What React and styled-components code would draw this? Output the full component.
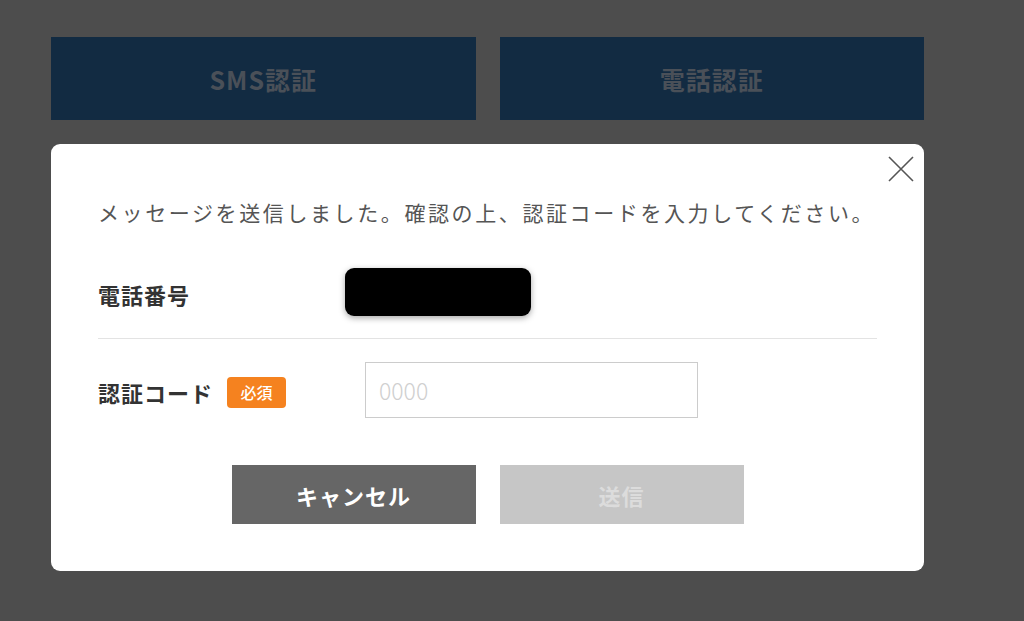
import React from "react";
import styled, { createGlobalStyle } from "styled-components";

const Global = createGlobalStyle`
  html, body { margin: 0; padding: 0; background: #4d4d4d; }
  body { font-family: "Noto Sans CJK JP", "Noto Sans", sans-serif; }
  * { box-sizing: border-box; }
`;

const Page = styled.div`
  width: 1024px;
  height: 621px;
  padding: 37px 0 0 51px;
  overflow: hidden;
`;

const Column = styled.div`
  width: 873px;
  display: flex;
  flex-direction: column;
  gap: 24px;
`;

const TabRow = styled.div`
  display: grid;
  grid-template-columns: 1fr 1fr;
  gap: 24px;
`;

const TabButton = styled.div`
  height: 83px;
  background: #122b42;
  color: #4a5058;
  font-weight: 700;
  font-size: 25px;
  letter-spacing: 1px;
  display: flex;
  align-items: center;
  justify-content: center;
`;

const Modal = styled.div`
  position: relative;
  background: #fff;
  border-radius: 9px;
  padding: 53px 47px 47px;
  display: flex;
  flex-direction: column;
`;

const Close = styled.button`
  position: absolute;
  top: 12px;
  right: 10px;
  width: 26px;
  height: 26px;
  padding: 0;
  border: 0;
  background: transparent;
  display: flex;
`;

const Message = styled.p`
  margin: 0;
  font-size: 21px;
  line-height: 30px;
  letter-spacing: 2.6px;
  color: #555;
  white-space: nowrap;
`;

const FieldRow = styled.div`
  display: grid;
  grid-template-columns: 267px 1fr;
  align-items: center;
  margin-top: ${(p) => p.$mt}px;
  padding-bottom: ${(p) => p.$pb || 0}px;
  border-bottom: ${(p) => (p.$divider ? "1px solid #e3e3e3" : "none")};
`;

const Label = styled.div`
  display: flex;
  align-items: center;
  font-size: 22px;
  font-weight: 700;
  letter-spacing: 1px;
  color: #333;
  padding-top: 4px;
`;

const Badge = styled.span`
  margin-left: 14px;
  width: 59px;
  height: 31px;
  border-radius: 4px;
  background: #f5821f;
  color: #fff;
  font-size: 16px;
  font-weight: 500;
  letter-spacing: 0;
  display: inline-flex;
  align-items: center;
  justify-content: center;
`;

const Redacted = styled.div`
  margin-left: -20px;
  width: 186px;
  height: 48px;
  background: #000;
  border-radius: 9px;
  box-shadow: 0 2px 6px rgba(0, 0, 0, 0.35);
`;

const CodeInput = styled.input`
  width: 333px;
  height: 56px;
  border: 1px solid #cccccc;
  border-radius: 0;
  padding: 0 13px;
  font-family: "Noto Sans CJK JP", sans-serif;
  font-size: 23px;
  font-weight: 300;
  color: #333;
  outline: none;
  &::placeholder { color: #cfcfcf; }
`;

const Actions = styled.div`
  margin-top: 47px;
  display: flex;
  justify-content: center;
  gap: 24px;
`;

const ActionButton = styled.button`
  width: 244px;
  height: 59px;
  border: 0;
  border-radius: 0;
  background: ${(p) => (p.$disabled ? "#c6c6c6" : "#666666")};
  color: ${(p) => (p.$disabled ? "#dcdcdc" : "#ffffff")};
  font-family: "Noto Sans CJK JP", sans-serif;
  font-size: 22px;
  letter-spacing: 1px;
  font-weight: 700;
  display: flex;
  align-items: center;
  justify-content: center;
`;

export default function App() {
  return (
    <>
      <Global />
      <Page>
        <Column>
          <TabRow>
            <TabButton>SMS認証</TabButton>
            <TabButton>電話認証</TabButton>
          </TabRow>
          <Modal>
            <Close aria-label="閉じる">
              <svg width="26" height="26" viewBox="0 0 26 26">
                <path d="M1 1 L25 25 M25 1 L1 25" stroke="#555" strokeWidth="1.6" fill="none" />
              </svg>
            </Close>
            <Message>メッセージを送信しました。確認の上、認証コードを入力してください。</Message>
            <FieldRow $mt={41} $pb={22} $divider>
              <Label>電話番号</Label>
              <Redacted />
            </FieldRow>
            <FieldRow $mt={23}>
              <Label>
                認証コード<Badge>必須</Badge>
              </Label>
              <CodeInput placeholder="0000" />
            </FieldRow>
            <Actions>
              <ActionButton>キャンセル</ActionButton>
              <ActionButton $disabled>送信</ActionButton>
            </Actions>
          </Modal>
        </Column>
      </Page>
    </>
  );
}
